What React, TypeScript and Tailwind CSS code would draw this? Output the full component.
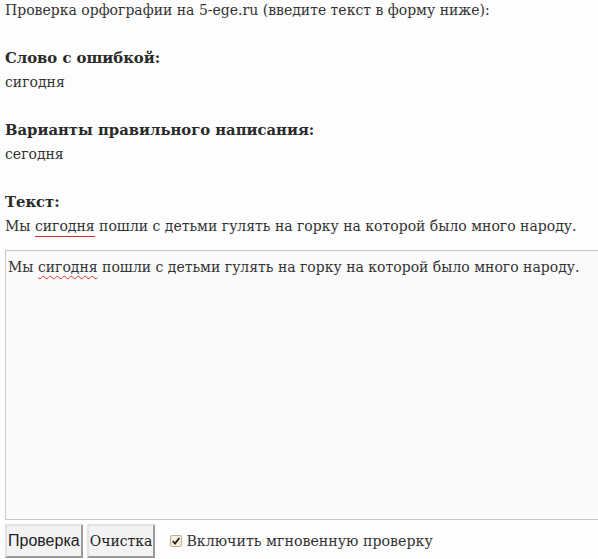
import React from "react";

const serif = { fontFamily: '"DejaVu Serif", Georgia, serif' };

export default function App() {
  return (
    <div
      className="w-[598px] h-[559px] overflow-hidden bg-[#fdfdfd] text-[#333] text-[14px] leading-[24px] pl-[5px]"
      style={serif}
    >
      <div className="-mt-[2px]">Проверка орфографии на 5-ege.ru (введите текст в форму ниже):</div>
      <div className="h-[24px]" />
      <div className="font-bold text-[14.8px] text-[#2a2a2a]">Слово с ошибкой:</div>
      <div>сигодня</div>
      <div className="h-[24px]" />
      <div className="font-bold text-[14.8px] text-[#2a2a2a]">Варианты правильного написания:</div>
      <div>сегодня</div>
      <div className="h-[24px]" />
      <div className="font-bold text-[14.8px] text-[#2a2a2a]">Текст:</div>
      <div className="whitespace-nowrap">
        Мы{" "}
        <span className="relative inline-block">
          сигодня
          <span className="absolute left-0 right-0 bottom-[1px] h-[1px] bg-[#d42a2a]" />
        </span>{" "}
        пошли с детьми гулять на горку на которой было много народу.
      </div>
      <div className="mt-[12px] h-[270px] w-[600px] border border-[#c8c8c8] bg-[#fafafa] px-[2px] pt-[4px] whitespace-nowrap">
        Мы{" "}
        <span className="underline decoration-wavy decoration-[#e03030] decoration-1 underline-offset-[3px]">сигодня</span>{" "}
        пошли с детьми гулять на горку на которой было много народу.
      </div>
      <div className="mt-[4px] flex items-center gap-[4px]">
        <button
          className="h-[34px] px-[1px] border-2 border-t-[#e2e2e2] border-l-[#e2e2e2] border-b-[#9a9a9a] border-r-[#9a9a9a] bg-[#f3f3f3] text-[#222] text-[16px]"
          style={{ fontFamily: '"Liberation Sans", Arial, sans-serif' }}
        >
          Проверка
        </button>
        <button className="h-[34px] px-[1px] border-2 border-t-[#e2e2e2] border-l-[#e2e2e2] border-b-[#9a9a9a] border-r-[#9a9a9a] bg-[#f3f3f3] text-[#222] text-[14px]">
          Очистка
        </button>
        <label className="ml-[11px] flex items-center gap-[4px]">
          <span className="w-[12px] h-[12px] border border-[#b8b0a0] bg-[#f7efd8] rounded-[2px] flex items-center justify-center">
            <svg width="10" height="10" viewBox="0 0 10 10">
              <path d="M1.8 5.2 L4 7.6 L8.4 2" fill="none" stroke="#222" strokeWidth="1.8" />
            </svg>
          </span>
          <span className="text-[14.2px]">Включить мгновенную проверку</span>
        </label>
      </div>
    </div>
  );
}
